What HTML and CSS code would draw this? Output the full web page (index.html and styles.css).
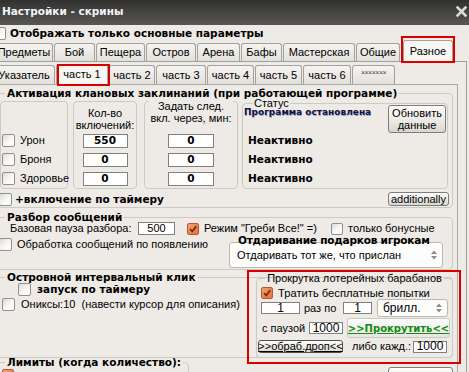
FILE: index.html
```html
<!DOCTYPE html>
<html lang="ru">
<head>
<meta charset="utf-8">
<title>Настройки - скрины</title>
<link rel="stylesheet" href="styles.css">
</head>
<body>
<header class="titlebar">
  <span class="title">Настройки - скрины</span>
  <svg class="close" width="11" height="11" viewBox="0 0 11 11"><path d="M1.5 1.5 L9.5 9.5 M9.5 1.5 L1.5 9.5" stroke="#dadada" stroke-width="2.6" stroke-linecap="square"/></svg>
</header>
<div class="optrow">
  <span class="cb"></span>
  <span class="b optlabel">Отображать только основные параметры</span>
</div>
<nav class="tabs tabs1">
  <span class="tab">Предметы</span>
  <span class="tab">Бой</span>
  <span class="tab">Пещера</span>
  <span class="tab">Остров</span>
  <span class="tab">Арена</span>
  <span class="tab">Бафы</span>
  <span class="tab">Мастерская</span>
  <span class="tab">Общие</span>
  <span class="tab sel">Разное</span>
</nav>
<section class="panel">
  <nav class="tabs tabs2">
    <span class="tab">Указатель</span>
    <span class="tab sel">часть 1</span>
    <span class="tab">часть 2</span>
    <span class="tab">часть 3</span>
    <span class="tab">часть 4</span>
    <span class="tab">часть 5</span>
    <span class="tab">часть 6</span>
    <span class="tab stars">×××××××</span>
  </nav>
  <div class="inner">
    <fieldset class="grp act">
      <legend class="b">Активация клановых заклинаний (при работающей программе)</legend>
      <div class="boxes">
        <div class="box box1">
          <div class="rows">
            <div class="row"><span class="cb"></span><span class="lbl">Урон</span></div>
            <div class="row"><span class="cb"></span><span class="lbl">Броня</span></div>
            <div class="row"><span class="cb"></span><span class="lbl">Здоровье</span></div>
          </div>
        </div>
        <div class="box box2">
          <div class="bhead">Кол-во<br>включений:</div>
          <div class="rows">
            <div class="row"><span class="inp b">550</span></div>
            <div class="row"><span class="inp b">0</span></div>
            <div class="row"><span class="inp b">0</span></div>
          </div>
        </div>
        <div class="box box3">
          <div class="bhead">Задать след.<br>вкл. через, мин:</div>
          <div class="rows">
            <div class="row"><span class="inp b">0</span></div>
            <div class="row"><span class="inp b">0</span></div>
            <div class="row"><span class="inp b">0</span></div>
          </div>
        </div>
        <fieldset class="status">
          <legend>Статус</legend>
          <div class="stop">
            <span class="state">Программа остановлена</span>
            <span class="btn refresh">Обновить<br>данные</span>
          </div>
          <div class="rows">
            <div class="row b">Неактивно</div>
            <div class="row b">Неактивно</div>
            <div class="row b">Неактивно</div>
          </div>
        </fieldset>
      </div>
      <div class="timer">
        <span class="cb"></span><span class="b tlbl">+включение по таймеру</span>
        <span class="btn addl">additionally</span>
      </div>
    </fieldset>

    <fieldset class="grp parse">
      <legend class="b">Разбор сообщений</legend>
      <div class="prow1">
        <span class="plabel">Базовая пауза разбора:</span>
        <span class="inp pin">500</span>
        <span class="cb on s12 pcb"><svg width="10" height="10" viewBox="0 0 10 10"><path d="M2 5 L4.2 7.5 L8.2 2.2" fill="none" stroke="#6a2a10" stroke-width="1.7"/></svg></span>
        <span class="mode">Режим "Греби Все!" =)</span>
        <span class="cb s12"></span>
        <span class="bonus">только бонусные</span>
      </div>
      <div class="prow2">
        <div class="pleft"><span class="cb"></span><span class="plbl">Обработка сообщений по появлению</span></div>
        <div class="gift">
          <div class="b gtitle">Отдаривание подарков игрокам</div>
          <div class="combo gcombo"><span>Отдаривать тот же, что прислан</span><svg width="8" height="12" viewBox="0 0 8 12"><path d="M1 5 L4 1.5 L7 5 Z M1 7 L4 10.5 L7 7 Z" fill="#8c8c8c"/></svg></div>
        </div>
      </div>
    </fieldset>

    <fieldset class="grp island">
      <legend class="b">Островной интервальный клик</legend>
      <div class="icontent">
        <div class="ileft">
          <div class="irow1"><span class="cb"></span><span class="b ilbl1">запуск по таймеру</span></div>
          <div class="irow2"><span class="cb"></span><span class="ilbl2">Ониксы:10&nbsp; (навести курсор для описания)</span></div>
        </div>
        <fieldset class="lottery">
          <legend>Прокрутка лотерейных барабанов</legend>
          <div class="la">
            <span class="cb on s12"><svg width="10" height="10" viewBox="0 0 10 10"><path d="M2 5 L4.2 7.5 L8.2 2.2" fill="none" stroke="#6a2a10" stroke-width="1.7"/></svg></span>
            <span class="latext">Тратить бесплатные попытки</span>
          </div>
          <div class="lb">
            <span class="inp n1">1</span>
            <span class="raz">раз по</span>
            <span class="inp n2">1</span>
            <span class="combo brill"><span>брилл.</span><svg width="8" height="12" viewBox="0 0 8 12"><path d="M1 5 L4 1.5 L7 5 Z M1 7 L4 10.5 L7 7 Z" fill="#8c8c8c"/></svg></span>
          </div>
          <div class="lc">
            <span class="pause">с паузой</span>
            <span class="inp n3">1000</span>
            <span class="btn spin">&gt;&gt;Прокрутить&lt;&lt;</span>
          </div>
          <div class="ld">
            <span class="btn drop">&gt;&gt;обраб.дроп&lt;&lt;</span>
            <span class="every">либо кажд.:</span>
            <span class="inp n4">1000</span>
          </div>
        </fieldset>
      </div>
    </fieldset>

    <div class="limrow">
      <fieldset class="grp lim">
        <legend class="b">Лимиты (когда количество):</legend>
        <span class="cb on s12 limcb"></span>
      </fieldset>
      <span class="btn limbtn"></span>
    </div>
  </div>
</section>

<div class="mark m1"></div>
<div class="mark m2"></div>
<div class="mark m3"></div>
</body>
</html>
```

FILE: styles.css
```css
* { box-sizing: border-box; }
html, body { margin: 0; padding: 0; }
body {
  width: 469px; height: 372px; overflow: hidden; position: relative;
  background: #eeebe6;
  font-family: "Liberation Sans", Arial, sans-serif;
  font-size: 11px; line-height: 13px; color: #000;
}
.b { font-family: "DejaVu Sans", Verdana, sans-serif; font-weight: bold; font-size: 10.5px; }

/* title bar */
.titlebar {
  height: 25px; display: flex; align-items: center; justify-content: space-between;
  padding: 0 1px 2px 2px;
  background: linear-gradient(#313130, #474643 55%, #585753);
  color: #f1f4f9;
}
.title { font-family: "DejaVu Sans", sans-serif; font-weight: bold; font-size: 10.5px; }
.close { display: block; margin-right: 1px; }

.optrow { height: 16px; display: flex; align-items: center; }
.optrow .cb { margin-left: -7px; }
.optlabel { margin-left: 4px; }

/* checkboxes */
.cb {
  flex: none; display: block; width: 13px; height: 13px;
  border: 1px solid #8f908f; border-radius: 2px;
  background: linear-gradient(135deg, #dcdcd8, #f8f8f6 55%, #fff);
}
.cb.s12 { width: 12px; height: 12px; }
.cb.on {
  display: flex; align-items: center; justify-content: center;
  background: linear-gradient(135deg, #f4a070, #e0703c);
  border-color: #b65a30;
}
.cb.on svg { display: block; }

/* tabs */
.tabs { display: flex; align-items: flex-end; }
.tab {
  flex: none; display: flex; align-items: center; justify-content: center;
  white-space: nowrap; margin-right: 1px;
  border: 1px solid #a3a19b; border-bottom: 0; border-radius: 3px 3px 0 0;
  background: linear-gradient(#f5f4f1, #e2e0da);
}
.tab.sel { position: relative; z-index: 2; background: #f7f6f3; margin-bottom: -1px; }
.tabs1 { height: 20px; margin-left: -5px; }
.tabs1 .tab { height: 18px; }
.tabs1 .tab.sel { height: 22px; margin-left: 2px; }
.tabs1 .tab:nth-child(1) { width: 58px; }
.tabs1 .tab:nth-child(2) { width: 41px; }
.tabs1 .tab:nth-child(3) { width: 49px; }
.tabs1 .tab:nth-child(4) { width: 50px; }
.tabs1 .tab:nth-child(5) { width: 43px; }
.tabs1 .tab:nth-child(6) { width: 41px; }
.tabs1 .tab:nth-child(7) { width: 72px; }
.tabs1 .tab:nth-child(8) { width: 44px; }
.tabs1 .tab:nth-child(9) { width: 50px; }

.panel {
  margin-left: -8px; width: 475px; height: 311px; overflow: hidden;
  border: 1px solid #9f9e98; border-bottom: 0; padding: 2px 8px 0 0;
}
.tabs2 { height: 20px; }
.tabs2 .tab { height: 19px; }
.tabs2 .tab.sel { height: 21px; padding-bottom: 2px; }
.tabs2 .tab:nth-child(1) { width: 62px; }
.tabs2 .tab:nth-child(2) { width: 52px; }
.tabs2 .tab:nth-child(3) { width: 46px; }
.tabs2 .tab:nth-child(4) { width: 50px; }
.tabs2 .tab:nth-child(5) { width: 47px; }
.tabs2 .tab:nth-child(6) { width: 47px; }
.tabs2 .tab:nth-child(7) { width: 48px; }
.tabs2 .tab:nth-child(8) { width: 43px; }
.tabs2 .stars { align-items: flex-start; padding-top: 3px; font-size: 7px; line-height: 7px; letter-spacing: -0.5px; color: #444; }

.inner {
  width: 465px; height: 288px; overflow: hidden;
  border: 1px solid #aaa9a3; border-bottom: 0; padding: 2px 4px 0 3px;
}

/* group boxes */
fieldset { margin: 0; padding: 0; min-width: 0; border: 1px solid #cdcac2; border-radius: 4px; }
legend { padding: 0 2px; line-height: 13px; white-space: nowrap; }
.grp > legend { margin-left: 7px; }

.boxes { display: flex; align-items: flex-start; margin-top: 1px; padding-left: 2px; }
.box {
  height: 88px; border: 1px solid #cdcac2; border-radius: 4px;
  display: flex; flex-direction: column;
}
.box1 { width: 68px; }
.box2 { width: 64px; margin-left: 5px; }
.box3 { width: 94px; margin-left: 7px; }
.bhead { line-height: 12px; text-align: center; }
.box2 .bhead { margin-top: 5px; }
.box3 .bhead { margin: -2px auto 0; padding: 0 1px; background: #eeebe6; }
.rows { margin-top: auto; }
.row { height: 19px; display: flex; align-items: center; }
.box1 .row { padding-left: 1px; }
.lbl { margin-left: 5px; }
.box2 .row, .box3 .row { justify-content: center; }
.inp {
  flex: none; display: flex; align-items: center; justify-content: center;
  background: #fff; border: 1px solid #80807e;
}
.box2 .inp { width: 45px; height: 14px; }
.box3 .inp { width: 46px; height: 14px; }

.status {
  display: flex; flex-direction: column;
  width: 206px; height: 92px; margin: -4px 0 0 4px;
}
.status > legend { margin-left: 10px; padding: 0 1px; line-height: 12px; }
.stop {
  display: flex; justify-content: space-between; align-items: flex-start;
  height: 20px; margin-top: -4px; padding: 0 1px 0 1px;
}
.state {
  margin-top: 2px; line-height: 10px;
  font-family: "DejaVu Sans", sans-serif; font-weight: bold; font-size: 9px;
  color: #14143c; text-shadow: 0.5px 0.5px 0 rgba(40, 70, 200, 0.45);
}
.status .row { padding-left: 5px; }

.btn {
  flex: none; display: flex; align-items: center; justify-content: center;
  text-align: center; white-space: nowrap;
  border: 1px solid #7d7d7b; border-radius: 3px;
  background: linear-gradient(#fdfdfc, #eceae6 55%, #d8d6d0);
}
.refresh { position: relative; z-index: 1; width: 58px; height: 28px; line-height: 12px; }

.timer { display: flex; align-items: center; height: 14px; margin: 3px 0 1px; }
.timer .cb { margin-left: 1px; }
.tlbl { margin-left: 3px; }
.addl { margin-left: auto; margin-right: 3px; width: 61px; height: 14px; }

/* message parsing */
.parse { margin-top: 3px; padding-bottom: 1px; }
.prow1 { display: flex; align-items: center; height: 13px; margin-top: -2px; padding-left: 12px; }
.plabel { width: 128px; }
.pin { width: 37px; height: 13px; }
.pcb { margin-left: 12px; }
.mode { width: 127px; margin-left: 5px; }
.bonus { margin-left: 5px; }
.prow2 { display: flex; align-items: flex-start; }
.pleft { display: flex; align-items: center; margin-top: 3px; }
.pleft .cb { margin-left: 1px; }
.plbl { margin-left: 5px; }
.gift { width: 214px; margin: 0 9px 0 auto; }
.gtitle { padding-left: 9px; line-height: 11px; letter-spacing: -0.2px; }
.combo {
  display: flex; align-items: center; justify-content: space-between;
  background: #fdfdfc; border: 1px solid #bcb9b2; border-radius: 3px;
}
.gcombo { height: 26px; margin-top: -4px; padding: 0 4px 0 7px; }

/* island */
.island { margin-top: 1px; }
.icontent { display: flex; align-items: flex-start; }
.ileft { flex: 1; min-width: 0; white-space: nowrap; }
.irow1 { display: flex; align-items: center; height: 13px; margin-top: -1px; }
.irow1 .cb { margin-left: 20px; }
.ilbl1 { margin-left: 6px; }
.irow2 { display: flex; align-items: center; height: 13px; margin-top: 2px; }
.irow2 .cb { margin-left: 4px; }
.ilbl2 { margin-left: 6px; }

.lottery { flex: none; width: 197px; margin: -12px -1px -1px 0; padding-bottom: 4px; }
.lottery > legend { margin: 0 auto; padding: 0 2px; line-height: 12px; }
.la { display: flex; align-items: center; height: 12px; margin-top: 3px; padding-left: 4px; }
.latext { margin-left: 5px; font-size: 11.2px; }
.lb { display: flex; align-items: center; height: 18px; padding-left: 4px; font-size: 12px; }
.n1 { width: 39px; height: 12px; }
.raz { width: 39px; margin-left: 4px; font-size: 11px; }
.n2 { width: 29px; height: 12px; }
.brill { width: 71px; height: 18px; margin-left: 5px; padding: 0 4px 0 5px; }
.lc { display: flex; align-items: center; height: 20px; margin-top: 1px; }
.pause { width: 47px; margin-left: 5px; }
.n3 { width: 34px; height: 12px; font-size: 12px; }
.spin {
  width: 103px; height: 20px; margin-left: 4px;
  border-color: #c9c8c3; background: linear-gradient(#fbfbfa, #f1f0ec 60%, #e6e5e0);
  color: #158a15; text-decoration: underline;
  font-family: "DejaVu Sans", sans-serif; font-weight: bold; font-size: 10px;
}
.ld { display: flex; align-items: center; height: 13px; margin-top: 2px; }
.drop { width: 85px; height: 13px; margin-left: 1px; border-color: #505050; text-decoration: underline; }
.every { width: 61px; margin-left: 9px; }
.n4 { width: 34px; height: 12px; font-size: 12px; }

/* limits */
.limrow { display: flex; align-items: flex-start; margin-top: -2px; }
.lim { width: 192px; height: 30px; }
.limcb { margin-left: 4px; }
.limbtn { margin: 11px 0 0 auto; width: 65px; height: 20px; }

/* red annotation frames */
.mark { position: absolute; z-index: 5; border: 2px solid #db0000; pointer-events: none; }
.m1 { left: 401px; top: 36px; width: 54px; height: 27px; }
.m2 { left: 57px; top: 64px; width: 53px; height: 22px; }
.m3 { left: 247px; top: 270px; width: 214px; height: 94px; }
```
